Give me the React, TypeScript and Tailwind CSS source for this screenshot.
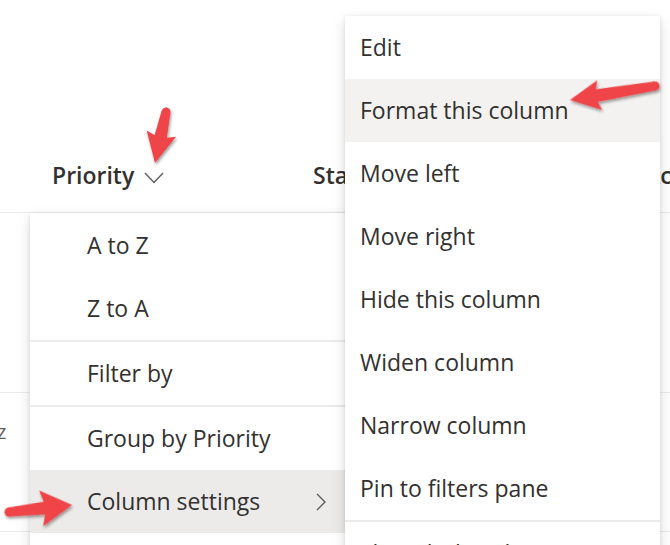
import React from "react";

const FONT = { fontFamily: '"Open Sans", "Noto Sans", sans-serif' };

function Arrow({ x1, y1, x2, y2, head = 28, width = 30, tail = 4.5, neck = 6.5 }: { x1: number; y1: number; x2: number; y2: number; head?: number; width?: number; tail?: number; neck?: number }) {
  const dx = x2 - x1;
  const dy = y2 - y1;
  const len = Math.sqrt(dx * dx + dy * dy);
  const ang = (Math.atan2(dy, dx) * 180) / Math.PI;
  const b = len - head;
  return (
    <g transform={`translate(${x1} ${y1}) rotate(${ang})`}>
      <circle cx={0} cy={0} r={tail} />
      <polygon points={`0,${-tail} ${b + 4},${-neck} ${b + 4},${neck} 0,${tail}`} />
      <polygon points={`${b - 2},${-width / 2} ${len},0 ${b - 2},${width / 2} ${b + 3},0`} />
    </g>
  );
}

function Chevron() {
  return (
    <svg width="20" height="12" viewBox="0 0 20 12" className="ml-[10px] mt-[4px] shrink-0">
      <path d="M1 1 L10 10.5 L19 1" fill="none" stroke="#605e5c" strokeWidth="1.4" />
    </svg>
  );
}

function Sep() {
  return <div className="h-[2px] bg-[#edebe9]" />;
}

function Item({ label, pl, bg = "", children }: { label: string; pl: string; bg?: string; children?: React.ReactNode }) {
  return (
    <div className={`flex h-[63px] items-center justify-between ${pl} ${bg}`}>
      <span className="whitespace-nowrap text-[23px] leading-none text-[#323130]">{label}</span>
      {children}
    </div>
  );
}

export default function App() {
  return (
    <div className="relative h-[545px] w-[670px] overflow-hidden bg-white" style={FONT}>
      {/* table behind */}
      <div className="flex flex-col">
        <div className="mt-[139px] flex h-[74px] items-center border-b border-[#edebe9] text-[23px] font-semibold text-[#323130]">
          <div className="flex w-[313px] shrink-0 items-center pl-[52px]">
            <span>Priority</span>
            <Chevron />
          </div>
          <div className="w-[332px] shrink-0">Status</div>
          <div className="shrink-0 whitespace-nowrap">Accountable</div>
        </div>
        <div className="h-[180px] border-b border-[#edebe9]" />
        <div className="flex h-[139px] items-start border-b border-[#edebe9] pt-[24px]">
          <span className="-ml-[8px] text-[20px] text-[#605e5c]">iz</span>
        </div>
      </div>

      {/* main menu */}
      <div className="absolute left-[30px] top-[213px] w-[330px] bg-white shadow-[0_6px_14px_rgba(0,0,0,0.13),0_1px_4px_rgba(0,0,0,0.11)]">
        <div className="h-[1px]" />
        <Item label="A to Z" pl="pl-[57px]" />
        <Item label="Z to A" pl="pl-[57px]" />
        <Sep />
        <Item label="Filter by" pl="pl-[57px]" />
        <Sep />
        <Item label="Group by Priority" pl="pl-[57px]" />
        <Item label="Column settings" pl="pl-[57px] pr-[33px]" bg="bg-[#edebe9]">
          <svg width="12" height="18" viewBox="0 0 12 18">
            <path d="M2 1 L10 9 L2 17" fill="none" stroke="#605e5c" strokeWidth="1.4" />
          </svg>
        </Item>
        <Item label="Open in grid view" pl="pl-[57px]" />
      </div>

      {/* submenu */}
      <div className="absolute left-[345px] top-[16px] w-[315px] bg-white shadow-[0_6px_14px_rgba(0,0,0,0.13),0_1px_4px_rgba(0,0,0,0.11)]">
        <Item label="Edit" pl="pl-[15px]" />
        <Item label="Format this column" pl="pl-[15px]" bg="bg-[#f3f2f1]" />
        <Item label="Move left" pl="pl-[15px]" />
        <Item label="Move right" pl="pl-[15px]" />
        <Item label="Hide this column" pl="pl-[15px]" />
        <Item label="Widen column" pl="pl-[15px]" />
        <Item label="Narrow column" pl="pl-[15px]" />
        <Item label="Pin to filters pane" pl="pl-[15px]" />
        <Sep />
        <Item label="Show/hide columns" pl="pl-[15px]" />
      </div>

      {/* annotation arrows */}
      <svg className="pointer-events-none absolute inset-0" width="670" height="545" viewBox="0 0 670 545">
        <defs>
          <filter id="sh" x="-20%" y="-20%" width="140%" height="140%">
            <feDropShadow dx="1" dy="2" stdDeviation="1.6" floodColor="#000" floodOpacity="0.4" />
          </filter>
        </defs>
        <g fill="#ef4449" filter="url(#sh)">
          <Arrow x1={166} y1={112} x2={155} y2={163} head={28} width={30} />
          <Arrow x1={655} y1={86} x2={570} y2={100} head={28} width={30} />
          <Arrow x1={9} y1={512} x2={72} y2={505} head={29} width={36} />
        </g>
      </svg>
    </div>
  );
}
